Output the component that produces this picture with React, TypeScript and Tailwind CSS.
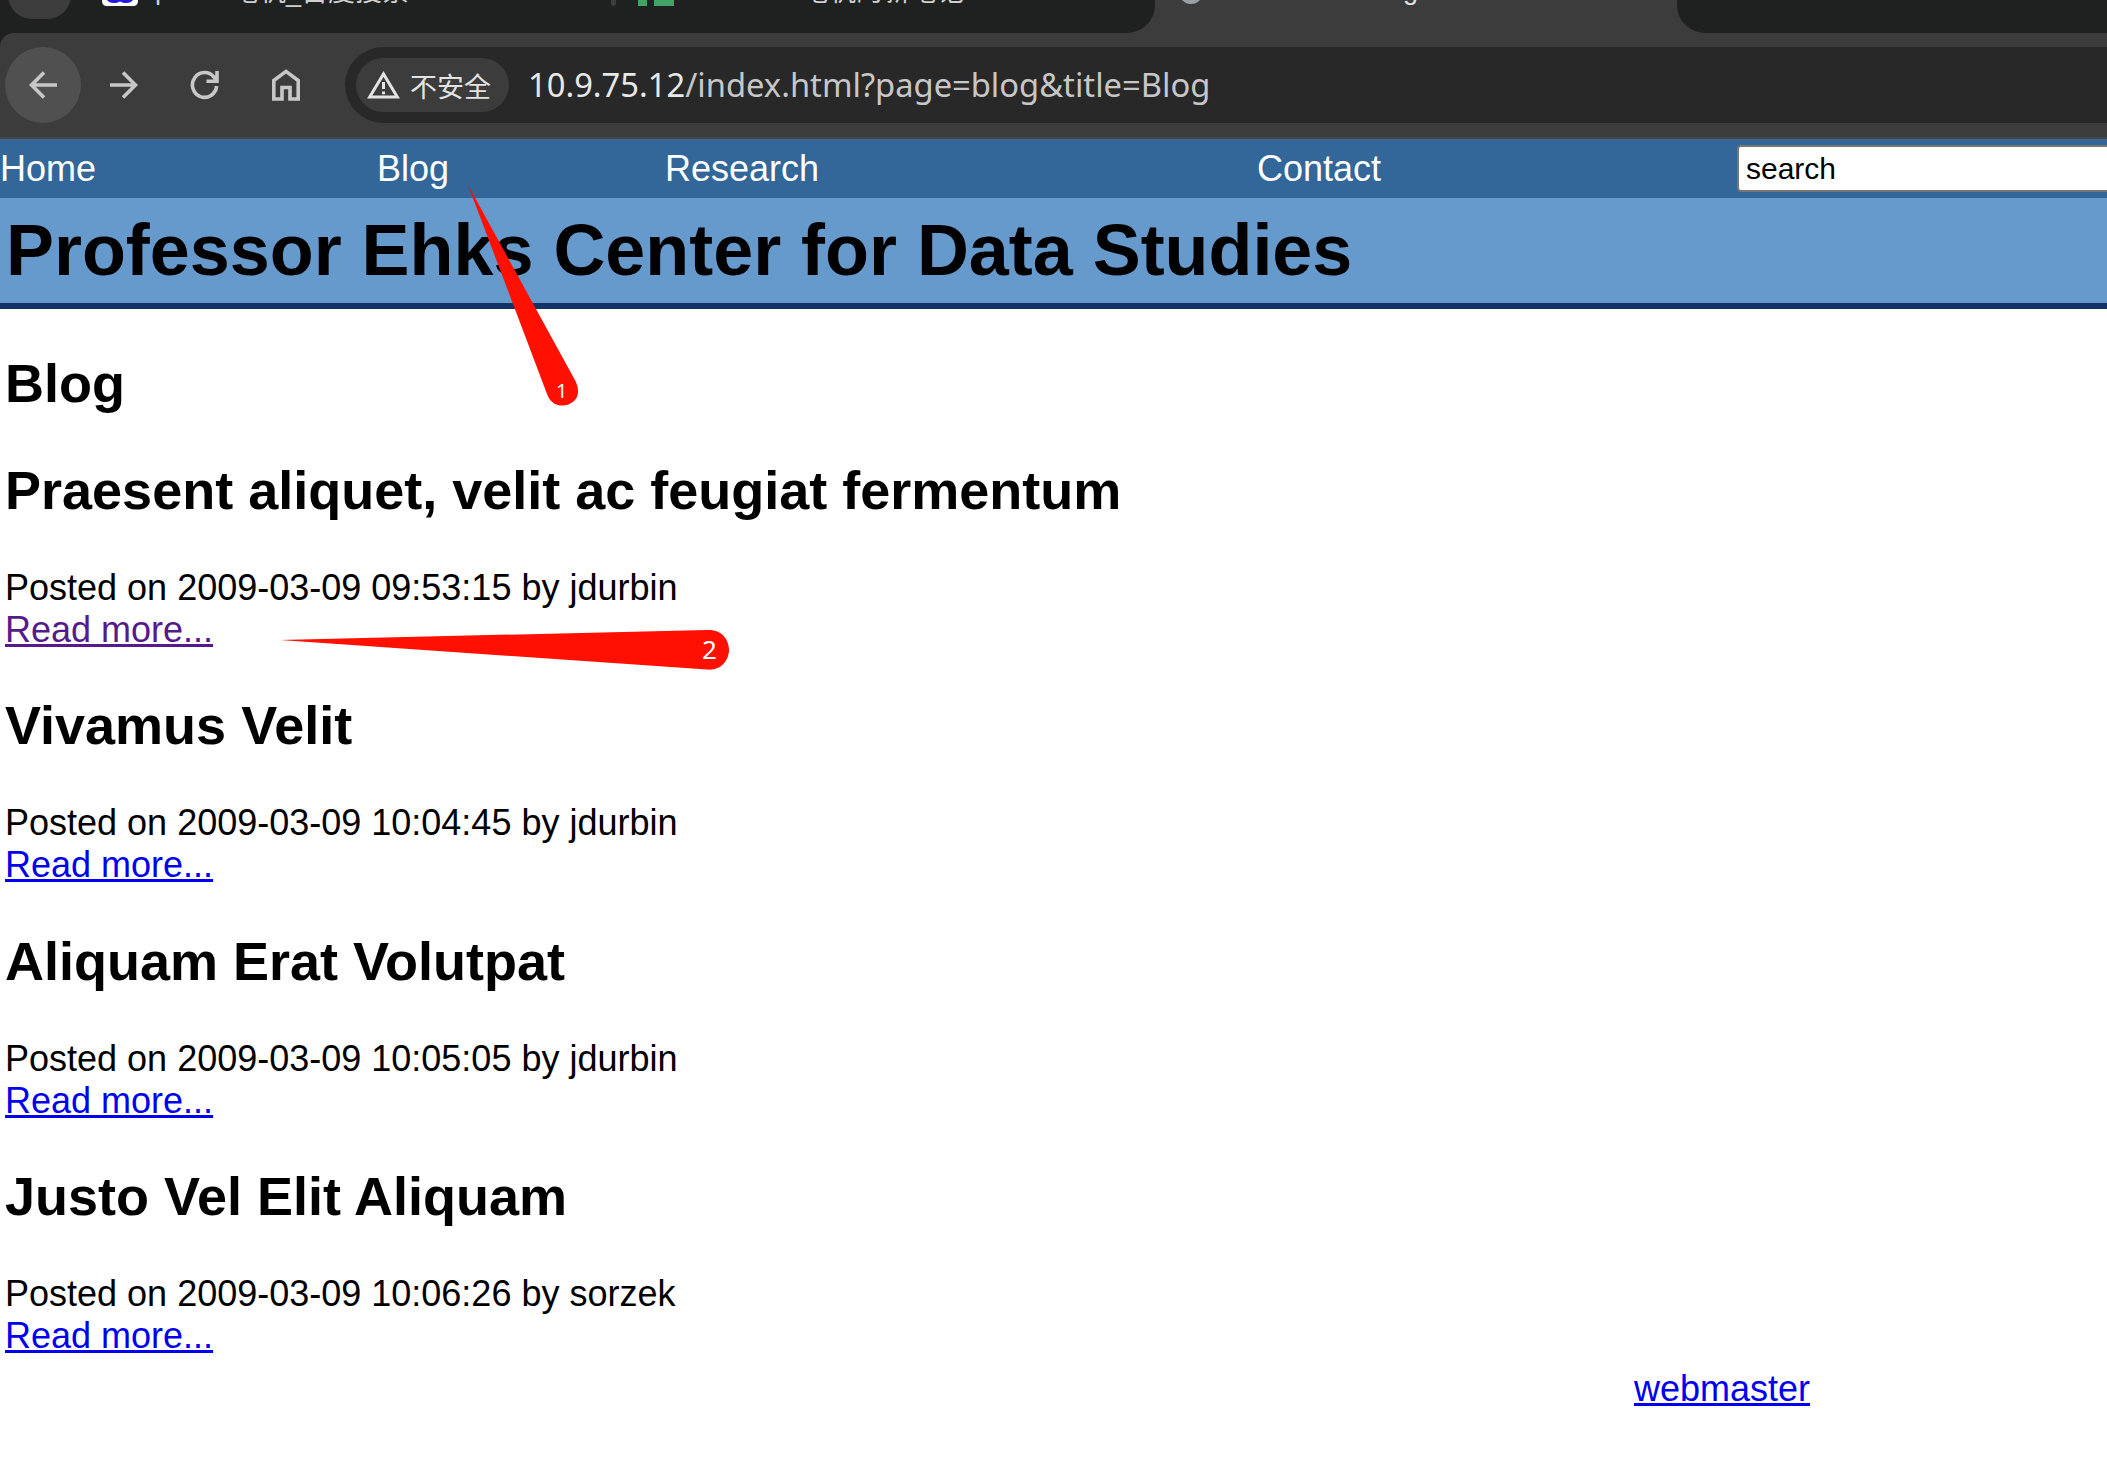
const posts = [
  { title: "Praesent aliquet, velit ac feugiat fermentum", meta: "Posted on 2009-03-09 09:53:15 by jdurbin", visited: true },
  { title: "Vivamus Velit", meta: "Posted on 2009-03-09 10:04:45 by jdurbin", visited: false },
  { title: "Aliquam Erat Volutpat", meta: "Posted on 2009-03-09 10:05:05 by jdurbin", visited: false },
  { title: "Justo Vel Elit Aliquam", meta: "Posted on 2009-03-09 10:06:26 by sorzek", visited: false },
];

function TabStrip() {
  return (
    <div className="relative flex h-[33px] overflow-hidden bg-[#3c3c3c]">
      <div className="relative h-[33px] w-[1155px] rounded-br-[28px] bg-[#1f2120]">
        <div className="absolute -top-[45px] left-[8px] h-[64px] w-[63px] rounded-[24px] bg-[#3c3c3c]" />
        <svg className="absolute left-[102px] top-0" width="36" height="6" viewBox="0 0 36 6">
          <path d="M0 0H36V1Q36 6 31 6H5Q0 6 0 1Z" fill="#fff" />
          <path d="M5 0H31Q29 3 24 3Q21 3 18 1.5Q15 3 12 3Q7 3 5 0Z" fill="#2319dc" />
        </svg>
        <div className="absolute -top-[28px] left-[155px] whitespace-pre text-[27px] leading-[36px] text-[#d0d0d0]">p</div>
        <div className="absolute -top-[26px] left-[232px] whitespace-pre text-[27px] leading-[36px] text-[#d0d0d0]">笔机_百度搜索</div>
        <div className="absolute left-[611px] top-0 h-[6px] w-[5px] rounded-b bg-[#3c3c3c]" />
        <div className="absolute left-[638px] top-0 h-[6px] w-[9px] bg-[#41a366]" />
        <div className="absolute left-[654px] top-0 h-[6px] w-[20px] bg-[#41a366]" />
        <div className="absolute -top-[26px] left-[802px] whitespace-pre text-[27px] leading-[36px] text-[#d0d0d0]">笔机的新笔记</div>
      </div>
      <div className="relative w-[522px]">
        <div className="absolute -top-[20px] left-[24px] size-[24px] rounded-full border-[4px] border-[#9aa0a6]" />
        <div className="absolute -top-[28px] left-[248px] text-[27px] leading-[36px] text-[#e3e3e3]">g</div>
      </div>
      <div className="h-[33px] flex-1 rounded-bl-[28px] bg-[#1f2120]" />
    </div>
  );
}

function Toolbar() {
  return (
    <div className="bg-[#1f2120]">
      <div className="flex h-[106px] items-start rounded-tl-[14px] border-b-2 border-[#464646] bg-[#3c3c3c] pl-[5px] pt-[14px]">
        <div className="flex size-[76px] items-center justify-center rounded-full bg-[#505050]">
          <svg width="28" height="28" viewBox="0 0 28 28" fill="none" stroke="#c7c7c7" strokeWidth="3.6">
            <path d="M28 14H3M15 1.5L2.5 14L15 26.5" />
          </svg>
        </div>
        <div className="ml-[5px] flex size-[76px] items-center justify-center">
          <svg width="28" height="28" viewBox="0 0 28 28" fill="none" stroke="#c7c7c7" strokeWidth="3.6">
            <path d="M0 14H25M13 1.5L25.5 14L13 26.5" />
          </svg>
        </div>
        <div className="ml-[5px] flex size-[76px] items-center justify-center">
          <svg width="30" height="30" viewBox="0 0 30 30" fill="none" stroke="#c7c7c7" strokeWidth="3.6">
            <path d="M26.6 16A12.1 12.4 0 1 1 24 7.2L26.5 10.5M27 1V11.3H16.5" />
          </svg>
        </div>
        <div className="ml-[5px] flex size-[76px] items-center justify-center">
          <svg width="30" height="32" viewBox="0 0 30 32" fill="none" stroke="#c7c7c7" strokeWidth="3.6">
            <path d="M2.8 30V11.5L15 2.4L27.2 11.5V30H19V18.5H11V30Z" />
          </svg>
        </div>
        <div className="ml-[21px] flex h-[76px] flex-1 items-center rounded-l-full bg-[#282828] pl-[11px]">
          <div className="flex h-[54px] w-[153px] items-center rounded-full bg-[#3c3c3c] pl-[11px]">
            <svg width="33" height="28" viewBox="0 0 33 28" fill="none" stroke="#e3e3e3" strokeWidth="3">
              <path d="M2.7 26H30.3L16.5 3Z" />
              <path d="M16.5 11V18M16.5 20.5V23.3" />
            </svg>
            <span className="ml-[10px] mt-[6px] whitespace-nowrap text-[27px] leading-[36px] text-[#e3e3e3]">不安全</span>
          </div>
          <span className="ml-[19px] whitespace-nowrap font-['Noto_Sans'] text-[32.7px] leading-[44px] text-[#c7c7c7]">
            <span className="text-[#e8e8e8]">10.9.75.12</span>/index.html?page=blog&amp;title=Blog
          </span>
        </div>
      </div>
    </div>
  );
}

function SiteNav() {
  return (
    <nav className="flex h-[59px] items-center bg-[#336699] text-[36px] leading-[42px] text-white">
      <a className="w-[377px]">Home</a>
      <a className="w-[288px]">Blog</a>
      <a className="w-[592px]">Research</a>
      <a className="w-[480px]">Contact</a>
      <div className="-mr-2 flex h-[47px] flex-1 items-center rounded-[4px] border-2 border-[#767676] bg-white pl-[7px] text-[30px] text-black">search</div>
    </nav>
  );
}

function Marker1() {
  return (
    <svg className="absolute left-[460px] top-[180px]" width="130" height="240" viewBox="0 0 130 240">
      <path d="M8 5L116 202Q121 214 114 221Q107 227 98 225Q90 223 87 214Z" fill="#ff1000" />
      <text x="96" y="218" fontSize="20" fill="#fff" fontFamily="Noto Sans">1</text>
    </svg>
  );
}

function Marker2() {
  return (
    <svg className="absolute left-[270px] top-[620px]" width="470" height="60" viewBox="0 0 470 60">
      <path d="M10 20L437 10C452 9 459 20 459 30C459 41 450 51 437 49.500Z" fill="#ff1000" />
      <text x="432" y="39" fontSize="26" fill="#fff" fontFamily="Noto Sans">2</text>
    </svg>
  );
}

export default function App() {
  return (
    <div className="relative h-[1468px] w-[2107px] overflow-hidden bg-white font-['Liberation_Sans','Noto_Sans_CJK_SC',sans-serif] text-black">
      <TabStrip />
      <Toolbar />
      <SiteNav />
      <header className="h-[111px] border-b-[6px] border-[#133366] bg-[#6699cc] pl-[6px] pt-[11px]">
        <h1 className="whitespace-nowrap text-[71.9px] font-bold leading-[82px]">Professor Ehks Center for Data Studies</h1>
      </header>
      <main className="pl-[5px]">
        <h2 className="mt-[43px] text-[54px] font-bold leading-[62px]">Blog</h2>
        {posts.map((p) => (
          <article key={p.title} className="flex h-[235.400px] flex-col items-start pt-[45px]">
            <h2 className="whitespace-nowrap text-[54px] font-bold leading-[62px]">{p.title}</h2>
            <p className="mt-[46px] text-[36px] leading-[42px]">{p.meta}</p>
            <a className={p.visited ? "text-[36px] leading-[42px] text-[#551a8b] underline decoration-[3px]" : "text-[36px] leading-[42px] text-[#0000ee] underline decoration-[3px]"}>Read more...</a>
          </article>
        ))}
      </main>
      <footer className="pl-[1634px] pt-[12px]">
        <a className="text-[36px] leading-[42px] text-[#0000ee] underline decoration-[3px]">webmaster</a>
      </footer>
      <Marker1 />
      <Marker2 />
    </div>
  );
}
